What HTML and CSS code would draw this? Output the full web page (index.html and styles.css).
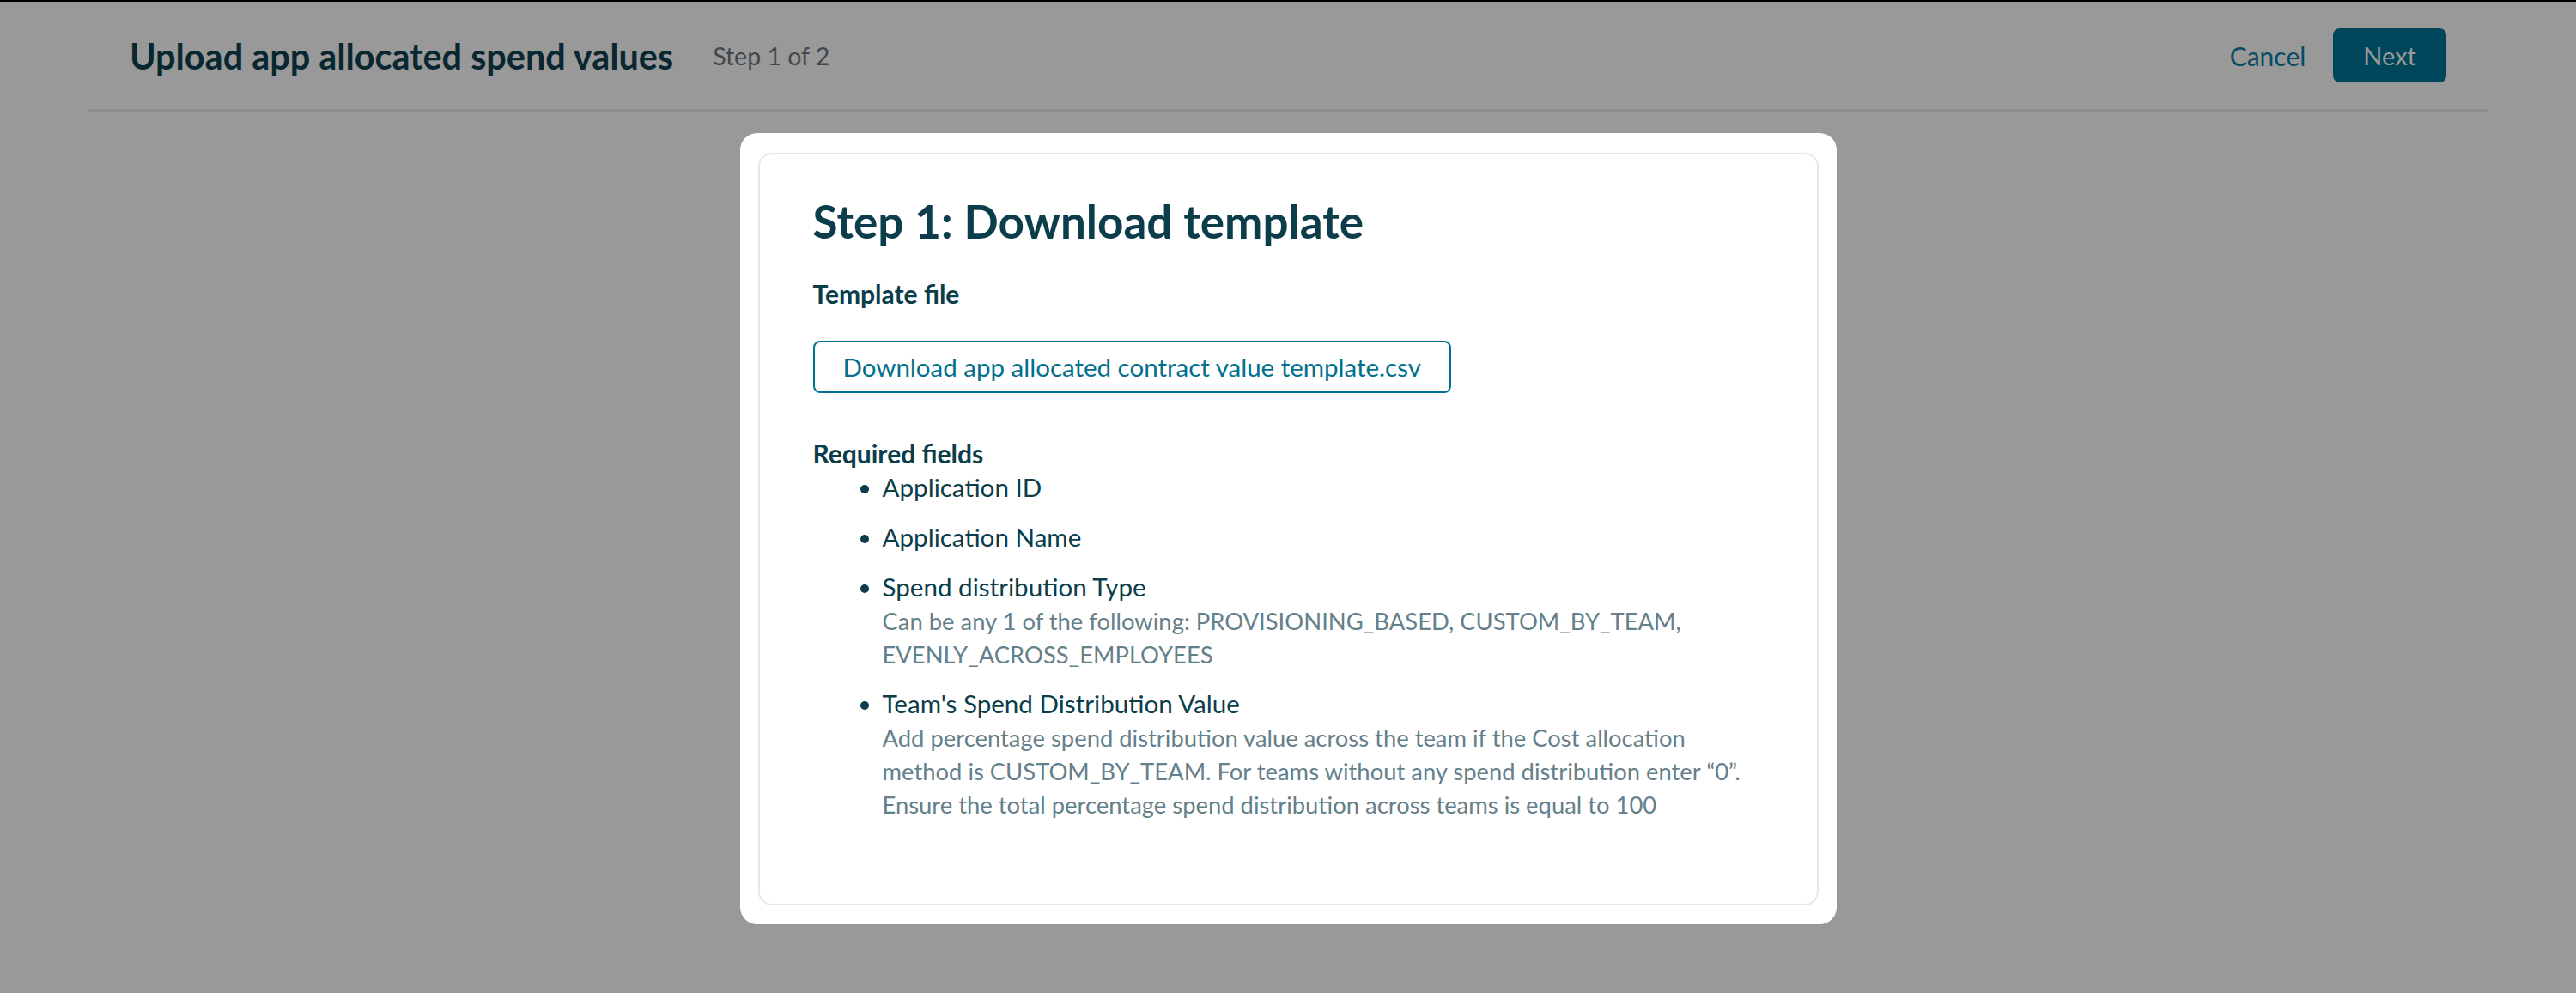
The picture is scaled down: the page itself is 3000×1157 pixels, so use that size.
FILE: index.html
```html
<!DOCTYPE html>
<html lang="en">
<head>
    <meta charset="UTF-8">
    <meta name="viewport" content="width=device-width, initial-scale=1.0">
    <title>Upload app allocated spend values</title>
    <link rel="stylesheet" href="styles.css">
</head>
<body>
    <div class="page-header">
        <div class="header-left">
            <h1 class="page-title">Upload app allocated spend values</h1>
            <span class="step-count">Step 1 of 2</span>
        </div>
        <div class="header-actions">
            <button class="btn-link">Cancel</button>
            <button class="btn-primary">Next</button>
        </div>
    </div>

    <!-- dimmed backdrop + dialog -->
    <div class="overlay">
        <div class="modal">
            <div class="card">
                <h2 class="card-title">Step 1: Download template</h2>

                <div class="label">Template file</div>
                <button class="btn-outline">Download app allocated contract value template.csv</button>

                <div class="label label-fields">Required fields</div>
                <ul class="field-list">
                    <li>
                        <div class="field-name">Application ID</div>
                    </li>
                    <li>
                        <div class="field-name">Application Name</div>
                    </li>
                    <li>
                        <div class="field-name">Spend distribution Type</div>
                        <div class="field-desc">Can be any 1 of the following: PROVISIONING_BASED, CUSTOM_BY_TEAM, EVENLY_ACROSS_EMPLOYEES</div>
                    </li>
                    <li>
                        <div class="field-name">Team's Spend Distribution Value</div>
                        <div class="field-desc">Add percentage spend distribution value across the team if the Cost allocation method is CUSTOM_BY_TEAM. For teams without any spend distribution enter “0”. Ensure the total percentage spend distribution across teams is equal to 100</div>
                    </li>
                </ul>
            </div>
        </div>
    </div>
</body>
</html>
```

FILE: styles.css
```css
body {
    margin: 0;
    border-top: 2px solid #000;
    background: #fff;
    font-family: Lato, "Open Sans", sans-serif;
    color: #0b3d4b;
}

.page-header {
    display: flex;
    align-items: center;
    justify-content: space-between;
    height: 125px;
    margin: 0 103px;
    padding: 0 48px;
    border-bottom: 4px solid #ececec;
}
.header-left { display: flex; align-items: center; gap: 46px; }
.page-title { margin: 0; font-size: 41.4px; font-weight: 700; color: #0f4252; }
.step-count { font-size: 28.5px; color: #6b7780; }
.header-actions { display: flex; align-items: center; gap: 32px; }

.btn-link {
    background: none;
    border: none;
    padding: 0;
    font-family: inherit;
    font-size: 30px;
    color: #0d7fa3;
    cursor: pointer;
}
.btn-primary {
    height: 63px;
    padding: 0 35px;
    background: #007698;
    color: #fff;
    border: none;
    border-radius: 8px;
    font-family: inherit;
    font-size: 29px;
    cursor: pointer;
}

.overlay {
    position: fixed;
    inset: 0;
    background: rgba(0, 0, 0, 0.4);
    display: flex;
    justify-content: center;
    align-items: flex-start;
    padding-top: 155px;
}
.modal {
    width: 1277px;
    padding: 23px 21px 22px;
    box-sizing: border-box;
    background: #fff;
    border-radius: 20px;
}
.card {
    border: 2px solid #e8e8e8;
    border-radius: 16px;
    padding: 46px 62px 96px;
}
.card-title {
    margin: 0 0 32px;
    font-size: 53px;
    line-height: 64px;
    font-weight: 700;
    color: #0b3d4b;
}
.label {
    font-size: 30px;
    line-height: 40px;
    font-weight: 700;
    color: #0b3d4b;
}
.label-fields { margin-top: 50px; }

.btn-outline {
    display: block;
    height: 61px;
    margin-top: 35px;
    padding: 0 33px;
    background: #fff;
    border: 2px solid #00708f;
    border-radius: 8px;
    font-family: inherit;
    font-size: 29.5px;
    color: #00708f;
    cursor: pointer;
}

.field-list { margin: 0; padding-left: 81px; }
.field-list li { margin-bottom: 18px; font-size: 29.6px; color: #0b3d4b; }
.field-list li:last-child { margin-bottom: 0; }
.field-name { line-height: 40px; }
.field-desc { font-size: 27.4px; line-height: 39px; color: #64808a; }
```
